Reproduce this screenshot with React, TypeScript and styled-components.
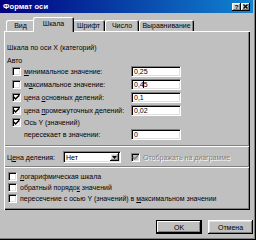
import React from "react";
import styled, { createGlobalStyle, css } from "styled-components";

const GlobalStyle = createGlobalStyle`
  html, body {
    margin: 0;
    padding: 0;
    background: #c0c0c0;
  }
  * {
    box-sizing: border-box;
  }
`;

const raised = css`
  box-shadow: inset -1px -1px #000, inset 1px 1px #fff, inset -2px -2px #808080,
    inset 2px 2px #dfdfdf;
`;

const sunken = css`
  border: 1px solid;
  border-color: #808080 #fff #fff #808080;
  box-shadow: inset 1px 1px #000, inset -1px -1px #dfdfdf;
`;

const Window = styled.div`
  width: 256px;
  height: 240px;
  display: flex;
  flex-direction: column;
  padding: 0 3px 3px 0;
  background: #c0c0c0;
  box-shadow: inset -1px -1px #000, inset -2px -2px #808080;
  font-family: "Liberation Sans", Arial, sans-serif;
  font-size: 7px;
  color: #000;
  overflow: hidden;
`;

const TitleBar = styled.div`
  height: 13px;
  display: flex;
  align-items: center;
  justify-content: space-between;
  padding: 0 3px 0 3px;
  background: linear-gradient(to right, #000080, #1084d0);
`;

const Title = styled.span`
  color: #fff;
  font-weight: bold;
  font-size: 7.5px;
  letter-spacing: 0.1px;
`;

const CaptionButtons = styled.div`
  display: flex;
  gap: 0;
`;

const CaptionButton = styled.div`
  width: 9px;
  height: 8px;
  background: #c0c0c0;
  ${raised};
  display: flex;
  align-items: center;
  justify-content: center;
  font-weight: bold;
  font-size: 6px;
  line-height: 8px;
`;

const TabBar = styled.div`
  height: 18px;
  display: flex;
  align-items: flex-end;
  padding-left: 6px;
  position: relative;
  z-index: 1;
`;

const Tab = styled.div<{ $w: number; $active?: boolean }>`
  width: ${(p) => p.$w}px;
  height: ${(p) => (p.$active ? 15 : 11)}px;
  margin: ${(p) => (p.$active ? "0 -2px" : "0")};
  margin-bottom: ${(p) => (p.$active ? "-1px" : "0")};
  display: flex;
  align-items: center;
  justify-content: center;
  padding-bottom: ${(p) => (p.$active ? 2 : 0)}px;
  background: #c0c0c0;
  border-radius: 2px 2px 0 0;
  box-shadow: inset 1px 1px #fff, inset -1px 0 #000, inset -2px 0 #808080;
  position: relative;
  z-index: ${(p) => (p.$active ? 2 : 0)};
`;

const Panel = styled.div`
  margin-left: 4px;
  width: 246px;
  height: 179px;
  display: flex;
  flex-direction: column;
  padding: 11px 1px 0 3px;
  box-shadow: inset 1px 1px #fff, inset -1px -1px #000, inset -2px -2px #808080;
`;

const Line = styled.div<{ $h: number; $mt?: number; $indent?: number }>`
  height: ${(p) => p.$h}px;
  margin-top: ${(p) => p.$mt ?? 0}px;
  padding-left: ${(p) => p.$indent ?? 0}px;
  display: flex;
  align-items: center;
  white-space: nowrap;
`;

const Group = styled.div`
  display: grid;
  grid-template-columns: 119px 50px;
  padding-left: 5px;
`;

const Cell = styled.div<{ $h: number; $indent?: number }>`
  height: ${(p) => p.$h}px;
  display: flex;
  align-items: center;
  padding-left: ${(p) => p.$indent ?? 0}px;
  white-space: nowrap;
`;

const Box = styled.span<{ $disabled?: boolean }>`
  width: 9px;
  height: 9px;
  flex: none;
  display: flex;
  align-items: center;
  justify-content: center;
  background: ${(p) => (p.$disabled ? "#c0c0c0" : "#fff")};
  ${sunken};
  margin-right: 3px;
`;

const Label = styled.span<{ $disabled?: boolean }>`
  color: ${(p) => (p.$disabled ? "#808080" : "#000")};
  text-shadow: ${(p) => (p.$disabled ? "1px 1px #fff" : "none")};
  u {
    text-decoration: underline;
    text-underline-offset: 1px;
  }
`;

const Field = styled.div`
  width: 50px;
  height: 11px;
  background: #fff;
  ${sunken};
  display: flex;
  align-items: center;
  padding-left: 2px;
`;

const Caret = styled.span`
  display: inline-block;
  width: 1px;
  height: 7px;
  background: #000;
  margin: 0 -0.5px;
  vertical-align: middle;
`;

const Separator = styled.div<{ $mt: number }>`
  height: 2px;
  margin: ${(p) => p.$mt}px 0 0 -2px;
  border-top: 1px solid #808080;
  border-bottom: 1px solid #fff;
`;

const Select = styled.div`
  width: 58px;
  height: 12px;
  margin-left: 8px;
  margin-right: 10px;
  background: #fff;
  ${sunken};
  display: flex;
  align-items: center;
  justify-content: space-between;
  padding: 0 1px 0 2px;
`;

const ArrowButton = styled.div`
  width: 9px;
  height: 8px;
  background: #c0c0c0;
  ${raised};
  display: flex;
  align-items: center;
  justify-content: center;
`;

const Footer = styled.div`
  display: flex;
  justify-content: flex-end;
  gap: 6px;
  margin-top: 10px;
  padding-right: 0;
`;

const Button = styled.div<{ $default?: boolean; $w: number }>`
  width: ${(p) => p.$w}px;
  height: 14px;
  display: flex;
  align-items: center;
  justify-content: center;
  background: #c0c0c0;
  ${raised};
  ${(p) =>
    p.$default &&
    css`
      border: 1px solid #000;
      box-shadow: inset -1px -1px #000, inset 1px 1px #fff, inset -2px -2px #808080;
    `}
`;

const Check = ({ color = "#000" }: { color?: string }) => (
  <svg width="7" height="7" viewBox="0 0 7 7">
    <polyline points="0.8,3 2.6,5 6.2,1.2" fill="none" stroke={color} strokeWidth="1.5" />
  </svg>
);

const CheckBox = ({ checked, disabled }: { checked?: boolean; disabled?: boolean }) => (
  <Box $disabled={disabled}>{checked && <Check color={disabled ? "#808080" : "#000"} />}</Box>
);

const tabs = [
  { name: "Вид", w: 29 },
  { name: "Шкала", w: 41, active: true },
  { name: "Шрифт", w: 33 },
  { name: "Число", w: 34 },
  { name: "Выравнивание", w: 55 },
];

export default function App() {
  return (
    <>
      <GlobalStyle />
      <Window>
        <TitleBar>
          <Title>Формат оси</Title>
          <CaptionButtons>
            <CaptionButton>?</CaptionButton>
            <CaptionButton>
              <svg width="5" height="5" viewBox="0 0 5 5">
                <path d="M0.5 0.5L4.5 4.5M4.5 0.5L0.5 4.5" stroke="#000" strokeWidth="1.3" />
              </svg>
            </CaptionButton>
          </CaptionButtons>
        </TitleBar>

        <TabBar>
          {tabs.map((t) => (
            <Tab key={t.name} $w={t.w} $active={t.active}>
              {t.name}
            </Tab>
          ))}
        </TabBar>

        <Panel>
          <Line $h={10}>Шкала по оси X (категорий)</Line>
          <Line $h={9} $mt={4}>
            Авто
          </Line>
          <Group>
            <Cell $h={13}>
              <CheckBox />
              <Label>
                <u>м</u>инимальное значение:
              </Label>
            </Cell>
            <Cell $h={13}>
              <Field>0,25</Field>
            </Cell>
            <Cell $h={13}>
              <CheckBox />
              <Label>
                м<u>а</u>ксимальное значение:
              </Label>
            </Cell>
            <Cell $h={13}>
              <Field>
                0,4<Caret />5
              </Field>
            </Cell>
            <Cell $h={13}>
              <CheckBox checked />
              <Label>
                цена <u>о</u>сновных делений:
              </Label>
            </Cell>
            <Cell $h={13}>
              <Field>0,1</Field>
            </Cell>
            <Cell $h={13}>
              <CheckBox checked />
              <Label>
                цена <u>п</u>ромежуточных делений:
              </Label>
            </Cell>
            <Cell $h={13}>
              <Field>0,02</Field>
            </Cell>
            <Cell $h={11}>
              <CheckBox checked />
              <Label>Ось Y (значений)</Label>
            </Cell>
            <Cell $h={11} />
            <Cell $h={13} $indent={12}>
              <Label>пересекает в значении:</Label>
            </Cell>
            <Cell $h={13}>
              <Field>0</Field>
            </Cell>
          </Group>

          <Separator $mt={4} />

          <Line $h={12} $mt={4}>
            <Label>
              Ц<u>е</u>на деления:
            </Label>
            <Select>
              <span>Нет</span>
              <ArrowButton>
                <svg width="5" height="3" viewBox="0 0 5 3">
                  <path d="M0 0H5L2.5 3Z" fill="#000" />
                </svg>
              </ArrowButton>
            </Select>
            <CheckBox checked disabled />
            <Label $disabled>Отображать на диаграмме</Label>
          </Line>

          <Separator $mt={3} />

          <Line $h={11} $mt={3} $indent={1}>
            <CheckBox />
            <Label>
              <u>л</u>огарифмическая шкала
            </Label>
          </Line>
          <Line $h={11} $indent={1}>
            <CheckBox />
            <Label>
              обратный порядо<u>к</u> значений
            </Label>
          </Line>
          <Line $h={11} $indent={1}>
            <CheckBox />
            <Label>
              пересечение с осью Y (значений) в <u>м</u>аксимальном значении
            </Label>
          </Line>
        </Panel>

        <Footer>
          <Button $default $w={46}>
            OK
          </Button>
          <Button $w={45}>Отмена</Button>
        </Footer>
      </Window>
    </>
  );
}
